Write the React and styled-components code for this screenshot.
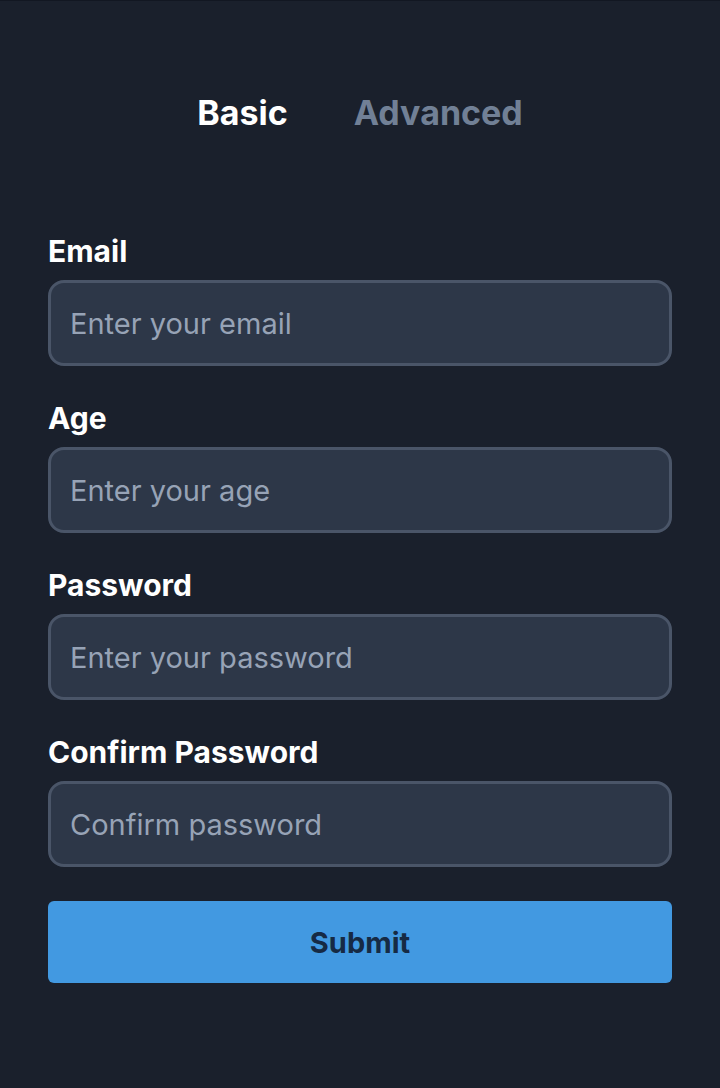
import styled, { createGlobalStyle } from "styled-components";

const GlobalStyle = createGlobalStyle`
  html, body {
    margin: 0;
    padding: 0;
    background: #1a202c;
  }
  body {
    font-family: Inter, Roboto, "Noto Sans", "Liberation Sans", sans-serif;
  }
  * {
    box-sizing: border-box;
  }
`;

const fields = [
  { id: "email", label: "Email", type: "email", placeholder: "Enter your email" },
  { id: "age", label: "Age", type: "text", placeholder: "Enter your age" },
  { id: "password", label: "Password", type: "password", placeholder: "Enter your password" },
  { id: "confirm", label: "Confirm Password", type: "password", placeholder: "Confirm password" },
];

const App = () => {
  return (
    <>
      <GlobalStyle />
      <Page>
        <Tabs>
          <Tab $active>Basic</Tab>
          <Tab>Advanced</Tab>
        </Tabs>
        <Form onSubmit={(e) => e.preventDefault()}>
          {fields.map((f) => (
            <Field key={f.id}>
              <Label htmlFor={f.id}>{f.label}</Label>
              <Input id={f.id} type={f.type} placeholder={f.placeholder} />
            </Field>
          ))}
          <SubmitBtn type="submit">Submit</SubmitBtn>
        </Form>
      </Page>
    </>
  );
};

const Page = styled.main`
  min-height: 1088px;
  background: #1a202c;
  border-top: 1px solid #121722;
  padding: 91px 48px 0 48px;
`;

const Tabs = styled.div`
  display: flex;
  justify-content: center;
  gap: 66px;
  margin-bottom: 99px;
`;

const Tab = styled.button`
  background: none;
  border: none;
  padding: 0;
  font-family: inherit;
  font-size: 34px;
  line-height: 42px;
  font-weight: 700;
  color: ${(p) => (p.$active ? "#ffffff" : "#718096")};
  cursor: pointer;
`;

const Form = styled.form`
  display: flex;
  flex-direction: column;
  gap: 34px;
`;

const Field = styled.div`
  display: flex;
  flex-direction: column;
`;

const Label = styled.label`
  font-size: 30px;
  line-height: 36px;
  font-weight: 700;
  color: #ffffff;
  margin-bottom: 11px;
`;

const Input = styled.input`
  height: 86px;
  width: 100%;
  background: #2d3748;
  border: 3px solid #4a5568;
  border-radius: 16px;
  padding: 0 19px;
  font-family: inherit;
  font-size: 29px;
  color: #e2e8f0;
  outline: none;

  &::placeholder {
    color: #97a3b6;
  }
`;

const SubmitBtn = styled.button`
  height: 82px;
  width: 100%;
  background: #4299e1;
  border: none;
  border-radius: 6px;
  font-family: inherit;
  font-size: 29px;
  font-weight: 700;
  color: #162a44;
  cursor: pointer;
`;

export default App;
